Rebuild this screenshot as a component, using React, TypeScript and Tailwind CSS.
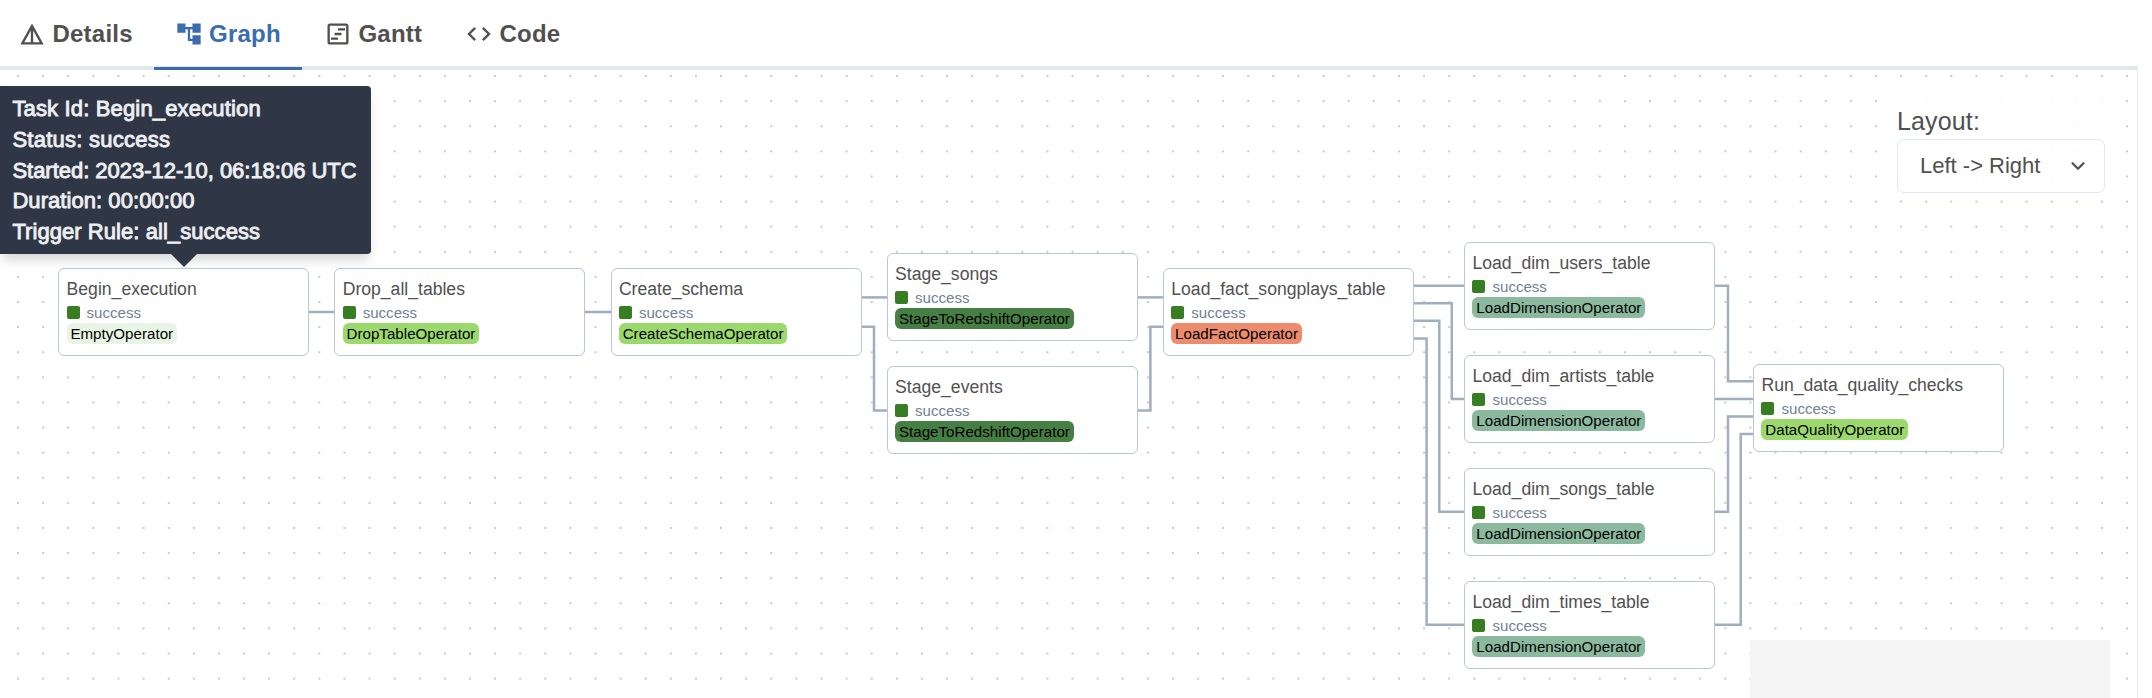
import { MdDetails, MdAccountTree, MdOutlineViewTimeline, MdCode } from "react-icons/md";
import { FiChevronDown } from "react-icons/fi";

const tabs = [
  { label: "Details", Icon: MdDetails, active: false, cls: "w-[154px] pl-[18.4px]" },
  { label: "Graph", Icon: MdAccountTree, active: true, cls: "w-[148px] pl-[21px]" },
  { label: "Gantt", Icon: MdOutlineViewTimeline, active: false, cls: "w-[142px] pl-[22.4px]" },
  { label: "Code", Icon: MdCode, active: false, cls: "w-[140px] pl-[21.4px]" },
];

const nodes = [
  { name: "Begin_execution", op: "EmptyOperator", color: "#e8f5e4", x: 58.3, y: 268 },
  { name: "Drop_all_tables", op: "DropTableOperator", color: "#9cd96c", x: 334.4, y: 268 },
  { name: "Create_schema", op: "CreateSchemaOperator", color: "#9cd96c", x: 610.6, y: 268 },
  { name: "Stage_songs", op: "StageToRedshiftOperator", color: "#467f43", x: 886.8, y: 253.4 },
  { name: "Stage_events", op: "StageToRedshiftOperator", color: "#467f43", x: 886.8, y: 366.4 },
  { name: "Load_fact_songplays_table", op: "LoadFactOperator", color: "#ec8c6c", x: 1163, y: 268 },
  { name: "Load_dim_users_table", op: "LoadDimensionOperator", color: "#8bb99e", x: 1464.2, y: 242 },
  { name: "Load_dim_artists_table", op: "LoadDimensionOperator", color: "#8bb99e", x: 1464.2, y: 355 },
  { name: "Load_dim_songs_table", op: "LoadDimensionOperator", color: "#8bb99e", x: 1464.2, y: 468 },
  { name: "Load_dim_times_table", op: "LoadDimensionOperator", color: "#8bb99e", x: 1464.2, y: 581 },
  { name: "Run_data_quality_checks", op: "DataQualityOperator", color: "#9cd96c", x: 1753.2, y: 363.6 },
];

const edges = [
  "M309 312H335",
  "M585 312H611",
  "M861 297.4H887",
  "M861 326.7H874V410.4H887",
  "M1137 297.4H1164",
  "M1137 410.4H1150.4V326.7H1164",
  "M1413 285.8H1465",
  "M1413 303.3H1451.8V399H1465",
  "M1413 320.8H1439.3V511.7H1465",
  "M1413 338.4H1426.6V624.7H1465",
  "M1714 285.8H1728V381.2H1754",
  "M1714 398.9H1754",
  "M1714 511.7H1728V416.4H1754",
  "M1714 624.7H1740.7V434H1754",
];

const details = [
  { text: "Task Id: Begin_execution", cls: "tracking-[0.16px]" },
  { text: "Status: success", cls: "tracking-[0.25px]" },
  { text: "Started: 2023-12-10, 06:18:06 UTC", cls: "tracking-[-0.02px]" },
  { text: "Duration: 00:00:00", cls: "tracking-[0.06px]" },
  { text: "Trigger Rule: all_success", cls: "tracking-[0.06px]" },
];

function TaskNode({ name, op, color, x, y }: (typeof nodes)[number]) {
  return (
    <div
      className="absolute flex h-[88px] w-[251px] flex-col items-start rounded-[6px] border border-[#bcc6d6] bg-white pl-[7.3px] pt-[9px]"
      style={{ left: x, top: y - 70 }}
    >
      <div className="h-[28px] whitespace-nowrap text-[17.6px] leading-[22px] text-[#515151]">{name}</div>
      <div className="flex h-[13px] items-center">
        <span className="h-[13px] w-[13px] rounded-[2px] bg-[#377e22]" />
        <span className="ml-[7px] text-[15.06px] leading-[13px] text-[#718096]">success</span>
      </div>
      <span
        className="mt-[4px] h-[21px] whitespace-nowrap rounded-[6px] px-[3.8px] text-[15.1px] leading-[21px] tracking-[0.03px] text-black"
        style={{ backgroundColor: color }}
      >
        {op}
      </span>
    </div>
  );
}

export default function App() {
  return (
    <div className="flex h-[698px] w-[2152px] flex-col overflow-hidden bg-white font-['Liberation_Sans',Arial,sans-serif]">
      <nav className="flex h-[70px] w-[2138px] border-b-4 border-[#e2e8f0]">
        {tabs.map(({ label, Icon, active, cls }) => (
          <div
            key={label}
            className={`${cls} flex h-[70px] shrink-0 items-center gap-[6px] text-2xl font-bold tracking-[0.25px] ${
              active ? "border-b-[3px] border-[#3a6cb0] text-[#3a6cb0]" : "pb-[3px] text-[#51504f]"
            }`}
          >
            <Icon className="size-7 shrink-0" />
            <span className="pt-px">{label}</span>
          </div>
        ))}
      </nav>

      <main className="relative h-[628px] w-[2138px] overflow-hidden border-r border-[#e2e8f0]">
        <svg className="absolute inset-0" width="2137" height="628">
          <defs>
            <pattern id="dots" x="5.5" y="-6.5" width="25.107" height="25.107" patternUnits="userSpaceOnUse">
              <circle cx="12.55" cy="12.55" r="0.8" fill="#81818a" />
            </pattern>
          </defs>
          <rect width="2137" height="628" fill="url(#dots)" />
          <g transform="translate(0 -70)" fill="none" stroke="#a0aec0" strokeWidth="2.5">
            {edges.map((d) => (
              <path key={d} d={d} />
            ))}
          </g>
        </svg>

        {nodes.map((n) => (
          <TaskNode key={n.name} {...n} />
        ))}

        <div className="absolute left-0 top-4 flex h-[168px] w-[371px] flex-col rounded-r-[4px] bg-[#2f3646] pl-[12.4px] pt-[8px] shadow-[0_8px_12px_-2px_rgba(0,0,0,0.16)]">
          {details.map(({ text, cls }) => (
            <div
              key={text}
              className={`${cls} whitespace-nowrap text-[22px] leading-[30.8px] text-[#eeeff1] [-webkit-text-stroke:0.9px_#eeeff1]`}
            >
              {text}
            </div>
          ))}
          <svg className="absolute left-[171px] top-[167.5px]" width="26" height="13">
            <path d="M0 0H26L13 13Z" fill="#2f3646" />
          </svg>
        </div>

        <div className="absolute left-[1897px] top-[22px] flex w-[208px] flex-col bg-white/85 text-[#505050]">
          <label className="h-[47px] pt-[9px] text-[25px] leading-[40px] tracking-[0.15px]">Layout:</label>
          <div className="flex h-[54px] items-center justify-between rounded-[7px] border border-[#e2e8f0] pb-px pl-[22px] pr-[15px] text-[22px]">
            <span>Left -&gt; Right</span>
            <FiChevronDown className="size-[22px]" strokeWidth={2.4} />
          </div>
        </div>

        <div className="absolute left-[1750px] top-[570px] h-[58px] w-[360px] bg-[#f5f5f5]" />
      </main>
    </div>
  );
}
